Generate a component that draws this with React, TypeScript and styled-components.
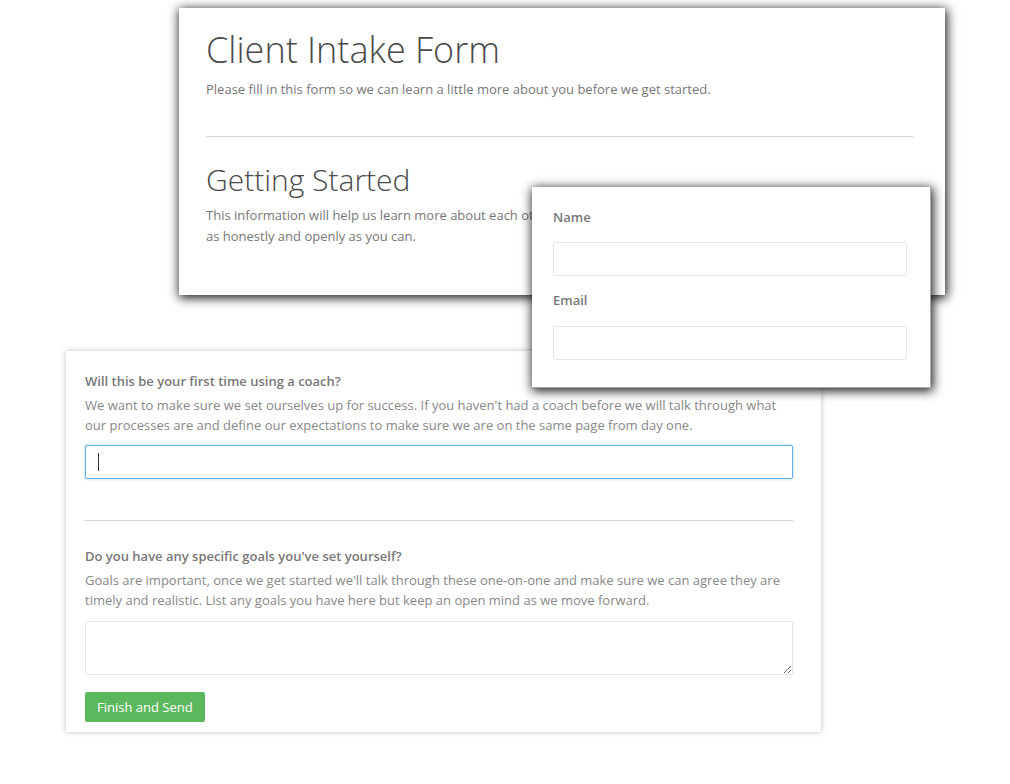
import React from "react";
import styled, { createGlobalStyle, css } from "styled-components";

const GlobalStyle = createGlobalStyle`
  html, body {
    margin: 0;
    padding: 0;
    background: #fff;
  }
  body {
    font-family: "Open Sans", "Liberation Sans", sans-serif;
    font-size: 13px;
    color: #777;
  }
  * {
    box-sizing: border-box;
  }
`;

const Canvas = styled.div`
  position: relative;
  width: 1010px;
  height: 784px;
  overflow: hidden;
`;

const Card = styled.div<{ $heavy?: boolean }>`
  position: absolute;
  background: #fff;
  display: flex;
  flex-direction: column;
  ${(p) =>
    p.$heavy
      ? css`
          box-shadow: 1px 2px 10px 1px rgba(0, 0, 0, 0.9);
        `
      : css`
          box-shadow: 0 0 6px rgba(0, 0, 0, 0.25);
        `}
`;

const IntroCard = styled(Card)`
  left: 179px;
  top: 8px;
  width: 766px;
  height: 287px;
  padding: 22px 32px 0 27px;
  z-index: 1;
`;

const ContactCard = styled(Card)`
  left: 532px;
  top: 187px;
  width: 399px;
  height: 201px;
  padding: 20px 23px 0 21px;
  z-index: 3;
  border-right: 1px solid #aaa;
  border-bottom: 1px solid #aaa;
`;

const QuestionCard = styled(Card)`
  left: 66px;
  top: 351px;
  width: 755px;
  height: 381px;
  padding: 20px 28px 0 19px;
  z-index: 2;
`;

const Title = styled.h1`
  margin: 0;
  font-size: 36px;
  line-height: 40px;
  font-weight: 300;
  color: #4a4a4a;
`;

const SubTitle = styled.h2`
  margin: 0;
  font-size: 30px;
  line-height: 34px;
  font-weight: 300;
  color: #4a4a4a;
`;

const Lead = styled.p<{ $gap: number }>`
  margin: ${(p) => p.$gap}px 0 0;
  line-height: 21px;
  color: #777;
`;

const Divider = styled.hr<{ $top: number; $bottom: number }>`
  margin: ${(p) => p.$top}px 0 ${(p) => p.$bottom}px;
  border: 0;
  border-top: 1px solid #d4d4d4;
  width: 100%;
`;

const Label = styled.label<{ $gap?: number }>`
  display: block;
  margin-top: ${(p) => p.$gap || 0}px;
  font-weight: 600;
  line-height: 20px;
  color: #777;
`;

const Help = styled.p`
  margin: 4px 0 0;
  line-height: 20px;
  color: #888;
`;

const FieldWrap = styled.div<{ $gap: number }>`
  position: relative;
  margin-top: ${(p) => p.$gap}px;
`;

const Field = styled.input<{ $focused?: boolean }>`
  display: block;
  width: 100%;
  height: 34px;
  padding: 6px 12px;
  font-family: inherit;
  font-size: 13px;
  color: #555;
  background: #fff;
  border: 1px solid #e6e6e6;
  border-radius: 2px;
  outline: none;
  caret-color: transparent;
  ${(p) =>
    p.$focused &&
    css`
      border-color: #66afe9;
      box-shadow: 0 0 3px rgba(102, 175, 233, 0.6);
    `}
`;

const Caret = styled.span`
  position: absolute;
  left: 13px;
  top: 8px;
  width: 1px;
  height: 18px;
  background: #333;
`;

const Area = styled.textarea`
  display: block;
  width: 100%;
  height: 54px;
  margin-top: 11px;
  padding: 6px 12px;
  font-family: inherit;
  font-size: 13px;
  border: 1px solid #e6e6e6;
  border-radius: 2px;
  outline: none;
  resize: vertical;
`;

const SendButton = styled.button`
  align-self: flex-start;
  margin-top: 17px;
  height: 30px;
  padding: 0 12px;
  font-family: inherit;
  font-size: 13px;
  color: #fff;
  background: #5cb85c;
  border: 0;
  border-radius: 2px;
  cursor: pointer;
`;

const App = () => {
  return (
    <Canvas>
      <GlobalStyle />
      <IntroCard $heavy>
        <Title>Client Intake Form</Title>
        <Lead $gap={9}>
          Please fill in this form so we can learn a little more about you before we get started.
        </Lead>
        <Divider $top={36} $bottom={26} />
        <SubTitle>Getting Started</SubTitle>
        <Lead $gap={8}>
          This information will help us learn more about each other. Please answer the questions below
          <br />
          as honestly and openly as you can.
        </Lead>
      </IntroCard>

      <ContactCard $heavy>
        <Label>Name</Label>
        <FieldWrap $gap={15}>
          <Field type="text" />
        </FieldWrap>
        <Label $gap={14}>Email</Label>
        <FieldWrap $gap={16}>
          <Field type="email" />
        </FieldWrap>
      </ContactCard>

      <QuestionCard>
        <Label>Will this be your first time using a coach?</Label>
        <Help>
          We want to make sure we set ourselves up for success. If you haven't had a coach before we
          will talk through what our processes are and define our expectations to make sure we are on
          the same page from day one.
        </Help>
        <FieldWrap $gap={10}>
          <Field $focused type="text" />
          <Caret />
        </FieldWrap>
        <Divider $top={41} $bottom={25} />
        <Label>Do you have any specific goals you've set yourself?</Label>
        <Help>
          Goals are important, once we get started we'll talk through these one-on-one and make sure we
          can agree they are timely and realistic. List any goals you have here but keep an open mind as
          we move forward.
        </Help>
        <Area />
        <SendButton>Finish and Send</SendButton>
      </QuestionCard>
    </Canvas>
  );
};

export default App;
